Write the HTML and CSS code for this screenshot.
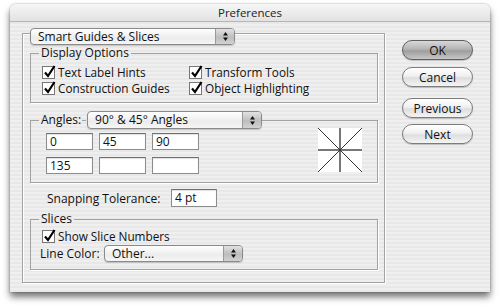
FILE: index.html
```html
<!DOCTYPE html>
<html>
<head>
<meta charset="utf-8">
<link rel="stylesheet" href="styles.css">
</head>
<body>
<div class="window">
  <div class="titlebar">Preferences</div>
  <div class="body">
    <div class="outer">
      <div class="popup popup-main"><span class="popup-text">Smart Guides &amp; Slices</span><span class="popup-arrows"><svg width="7" height="11" viewBox="0 0 7 11"><path d="M3.5 1 L6 4.5 H1 Z M3.5 10 L6 6.5 H1 Z" fill="#111"/></svg></span></div>

      <fieldset class="group display">
        <legend>Display Options</legend>
        <div class="checks">
          <label class="check"><span class="cb"><svg width="14" height="14" viewBox="0 0 14 14"><rect x="0.5" y="1.5" width="12" height="12" fill="#fff" stroke="#777"/><path d="M3 7.5 L6 11 L12.5 1" fill="none" stroke="#000" stroke-width="2.2"/></svg></span>Text Label Hints</label>
          <label class="check"><span class="cb"><svg width="14" height="14" viewBox="0 0 14 14"><rect x="0.5" y="1.5" width="12" height="12" fill="#fff" stroke="#777"/><path d="M3 7.5 L6 11 L12.5 1" fill="none" stroke="#000" stroke-width="2.2"/></svg></span>Transform Tools</label>
          <label class="check"><span class="cb"><svg width="14" height="14" viewBox="0 0 14 14"><rect x="0.5" y="1.5" width="12" height="12" fill="#fff" stroke="#777"/><path d="M3 7.5 L6 11 L12.5 1" fill="none" stroke="#000" stroke-width="2.2"/></svg></span>Construction Guides</label>
          <label class="check"><span class="cb"><svg width="14" height="14" viewBox="0 0 14 14"><rect x="0.5" y="1.5" width="12" height="12" fill="#fff" stroke="#777"/><path d="M3 7.5 L6 11 L12.5 1" fill="none" stroke="#000" stroke-width="2.2"/></svg></span>Object Highlighting</label>
        </div>
      </fieldset>

      <fieldset class="group angles">
        <legend><span class="legend-label">Angles:</span><span class="dash"></span><span class="popup popup-angles"><span class="popup-text">90° &amp; 45° Angles</span><span class="popup-arrows"><svg width="7" height="11" viewBox="0 0 7 11"><path d="M3.5 1 L6 4.5 H1 Z M3.5 10 L6 6.5 H1 Z" fill="#111"/></svg></span></span></legend>
        <div class="angles-body">
          <div class="fields">
            <span class="field">0</span>
            <span class="field">45</span>
            <span class="field">90</span>
            <span class="field">135</span>
            <span class="field"></span>
            <span class="field"></span>
          </div>
          <svg class="diagram" width="44" height="44" viewBox="0 0 44 44">
            <rect width="44" height="44" fill="#fff"/>
            <line x1="22" y1="0" x2="22" y2="44" stroke="#777" stroke-width="2"/>
            <line x1="0" y1="22" x2="44" y2="22" stroke="#777" stroke-width="2"/>
            <line x1="0" y1="0" x2="44" y2="44" stroke="#333" stroke-width="1"/>
            <line x1="44" y1="0" x2="0" y2="44" stroke="#333" stroke-width="1"/>
          </svg>
        </div>
      </fieldset>

      <div class="snap">
        <span class="snap-label">Snapping Tolerance:</span>
        <span class="field field-snap">4 pt</span>
      </div>

      <fieldset class="group slices">
        <legend>Slices</legend>
        <label class="check check-slices"><span class="cb"><svg width="14" height="14" viewBox="0 0 14 14"><rect x="0.5" y="1.5" width="12" height="12" fill="#fff" stroke="#777"/><path d="M3 7.5 L6 11 L12.5 1" fill="none" stroke="#000" stroke-width="2.2"/></svg></span>Show Slice Numbers</label>
        <div class="linecolor">
          <span class="lc-label">Line Color:</span>
          <span class="popup popup-color"><span class="popup-text">Other...</span><span class="popup-arrows"><svg width="7" height="11" viewBox="0 0 7 11"><path d="M3.5 1 L6 4.5 H1 Z M3.5 10 L6 6.5 H1 Z" fill="#111"/></svg></span></span>
        </div>
      </fieldset>
    </div>

    <div class="buttons">
      <button class="btn btn-default">OK</button>
      <button class="btn">Cancel</button>
      <button class="btn btn-prev">Previous</button>
      <button class="btn">Next</button>
    </div>
  </div>
</div>
</body>
</html>
```

FILE: styles.css
```css
* { box-sizing: border-box; }

html, body {
  margin: 0;
  padding: 0;
  background: #ffffff;
}

body {
  width: 500px;
  height: 308px;
  overflow: hidden;
  font-family: "Open Sans", "Liberation Sans", Arial, sans-serif;
  font-size: 12px;
  line-height: 15px;
  color: #111;
}

.window {
  margin: 4px 0 0 10px;
  width: 480px;
  height: 288px;
  border-radius: 6px 6px 0 0;
  background: repeating-linear-gradient(to bottom, #efefef 0, #efefef 2px, #e8e8e8 2px, #e8e8e8 4px);
  box-shadow: 0 5px 7px rgba(0, 0, 0, 0.55), 0 0 2px rgba(0, 0, 0, 0.35);
  overflow: hidden;
}

.titlebar {
  height: 18px;
  line-height: 17px;
  text-align: center;
  font-size: 11.5px;
  color: #222;
  background: linear-gradient(to bottom, #f6f6f6, #e2e2e2);
  border-bottom: 1px solid #b5b5b5;
}

.body {
  display: flex;
  align-items: flex-start;
}

.outer {
  margin: 11px 0 0 12px;
  width: 363px;
  height: 250px;
  border: 1px solid #a2a2a2;
  box-shadow: 1px 1px 0 #fff, inset 1px 1px 0 #fff;
  display: flex;
  flex-direction: column;
  align-items: flex-start;
}

/* Popup menus */
.popup {
  display: flex;
  align-items: stretch;
  height: 17px;
  border: 1px solid #8a8a8a;
  border-radius: 4px;
  background: linear-gradient(to bottom, #ffffff, #ececec 60%, #f6f6f6);
  box-shadow: 0 1px 1px rgba(0, 0, 0, 0.18);
  overflow: hidden;
}

.popup-text {
  flex: 1;
  padding-left: 7px;
  line-height: 15px;
  white-space: nowrap;
}

.popup-arrows {
  width: 19px;
  display: flex;
  align-items: center;
  justify-content: center;
  border-left: 1px solid #9a9a9a;
  background: linear-gradient(to bottom, #e2e2e2, #bdbdbd 55%, #d2d2d2);
}

.popup-main {
  margin: -6px 0 0 7px;
  width: 205px;
}

/* Group boxes */
.group {
  margin: 0 0 0 7px;
  padding: 0;
  width: 348px;
  border: 1px solid #a2a2a2;
  box-shadow: 1px 1px 0 #fff;
  min-width: 0;
}

.group legend {
  margin-left: 8px;
  padding: 0 2px;
  line-height: 14px;
}

.display {
  margin-top: 1px;
  height: 57px;
}

.checks {
  display: grid;
  grid-template-columns: 147px auto;
  grid-auto-rows: 16px;
  padding: 4px 0 0 11px;
}

.check {
  display: flex;
  align-items: center;
  white-space: nowrap;
  height: 16px;
  font-size: 11.75px;
  line-height: 16px;
}

.cb {
  width: 16px;
  height: 14px;
  display: flex;
  align-items: center;
}

.cb svg { display: block; }

.angles {
  margin-top: 8px;
  height: 72px;
}

.angles legend {
  display: flex;
  align-items: center;
  padding: 0;
  margin-left: 8px;
}

.legend-label {
  padding: 0 1px 0 2px;
}

.dash {
  width: 4px;
  height: 1px;
  background: #a2a2a2;
  margin-right: 1px;
}

.popup-angles {
  width: 175px;
  height: 18px;
}

.popup-angles .popup-text { line-height: 16px; }

.angles-body {
  display: flex;
  align-items: flex-start;
  padding: 4px 15px 0 15px;
}

.fields {
  display: grid;
  grid-template-columns: repeat(3, 47px);
  column-gap: 6px;
  row-gap: 7px;
}

.field {
  display: block;
  height: 17px;
  border: 1px solid #8c8c8c;
  border-top-color: #6f6f6f;
  background: #fff;
  padding-left: 3px;
  line-height: 15px;
  box-shadow: inset 0 1px 1px rgba(0, 0, 0, 0.12);
}

.diagram {
  display: block;
  margin: -5px 0 0 auto;
}

.snap {
  display: flex;
  align-items: center;
  margin: 6px 0 0 24px;
  height: 18px;
}

.snap-label {
  width: 124px;
}

.field-snap {
  width: 46px;
  height: 18px;
  line-height: 16px;
}

.slices {
  margin-top: 5px;
  height: 58px;
}

.check-slices {
  padding: 2px 0 0 11px;
  height: 17px;
}

.linecolor {
  display: flex;
  align-items: center;
  margin: 2px 0 0 9px;
}

.lc-label {
  width: 64px;
}

.popup-color {
  width: 139px;
}

/* Buttons */
.buttons {
  margin: 18px 0 0 17px;
  width: 71px;
  display: flex;
  flex-direction: column;
}

.btn {
  font-family: "Open Sans", "Liberation Sans", Arial, sans-serif;
  font-size: 12px;
  color: #111;
  height: 20px;
  width: 71px;
  padding: 0;
  border: 1px solid #7c7c7c;
  border-radius: 10px;
  background: linear-gradient(to bottom, #ffffff 0%, #f0f0f0 45%, #dedede 55%, #f4f4f4 100%);
  box-shadow: 0 1px 1px rgba(0, 0, 0, 0.2);
  margin-bottom: 7px;
}

.btn-default {
  border-color: #5e5e5e;
  background: linear-gradient(to bottom, #d8d8d8 0%, #b4b4b4 45%, #9e9e9e 55%, #c6c6c6 100%);
}

.btn-prev {
  margin-top: 4px;
  margin-bottom: 6px;
}
```
